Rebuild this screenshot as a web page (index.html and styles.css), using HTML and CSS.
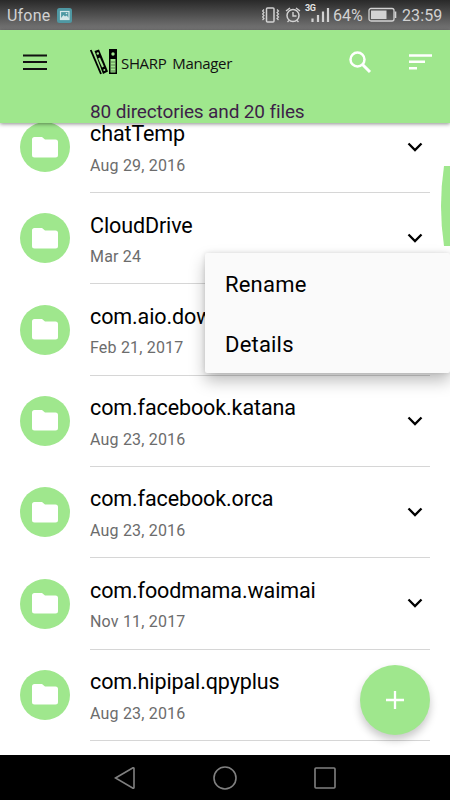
FILE: index.html
```
<!DOCTYPE html>
<html lang="en">
<head>
<meta charset="utf-8">
<title>SHARP Manager</title>
<link rel="stylesheet" href="styles.css">
</head>
<body>
<svg class="defs" width="0" height="0">
  <symbol id="folder" viewBox="0 0 26 21"><path d="M2.500 0H10L13 2.500H23.500A2.500 2.500 0 0 1 26 5V18A2.500 2.500 0 0 1 23.500 20.500H2.500A2.500 2.500 0 0 1 0 18V2.500A2.500 2.500 0 0 1 2.500 0Z" fill="#fff"/></symbol>
  <symbol id="chevron" viewBox="0 0 16 10"><path d="M1.500 1.500L8 8L14.500 1.500" fill="none" stroke="#000" stroke-width="2.300"/></symbol>
</svg>
<div class="screen">
  <div class="status">
    <span class="carrier">Ufone</span>
    <svg class="picture" width="15" height="15" viewBox="0 0 15 15"><rect width="15" height="15" rx="2.500" fill="#4f98a3"/><rect x="3.500" y="3.500" width="8.500" height="8" fill="none" stroke="#d5e6e8" stroke-width="1.200"/><path d="M4 10L6.500 7L8 8.500L9.500 7.500L12 10V11H4Z" fill="#d5e6e8"/><circle cx="9.500" cy="5.500" r=".8" fill="#d5e6e8"/></svg>
    <svg class="indicators" width="70" height="30" viewBox="262 0 70 30" fill="none" stroke="#d2d2d2">
      <rect x="266.500" y="8" width="7.500" height="14" rx="1" stroke-width="1.500"/>
      <path d="M264 9.500L262.500 11L264 12.500L262.500 14L264 15.500L262.500 17L264 18.500L262.500 20M277 9.500L278.500 11L277 12.500L278.500 14L277 15.500L278.500 17L277 18.500L278.500 20" stroke-width="1.200"/>
      <circle cx="293" cy="15.500" r="6" stroke-width="1.500"/>
      <path d="M293 12V16H296.500M286 11L290 8M300 11L296 8M289 20.500L287.500 22M297 20.500L298.500 22" stroke-width="1.400"/>
      <path d="M312.500 18.500V22M318 15V22M323 11.500V22M328 8V22" stroke-width="2.200"/>
      <text class="network" x="305" y="11">3G</text>
    </svg>
    <span class="percent">64%</span>
    <svg class="battery" width="29" height="16" viewBox="0 0 29 16"><rect x="1" y="1.500" width="25" height="12.500" rx="2" fill="none" stroke="#d2d2d2" stroke-width="1.300"/><rect x="3" y="3.500" width="15.500" height="8.500" fill="#d2d2d2"/><path d="M27.500 4.500V11" stroke="#d2d2d2" stroke-width="1.600"/></svg>
    <span class="clock">23:59</span>
  </div>
  <header class="appbar">
    <div class="toolbar">
      <svg class="menu-icon" width="24" height="16" viewBox="0 0 24 16"><path d="M0 1.500H24M0 8H24M0 15H24" stroke="#111" stroke-width="2"/></svg>
      <svg class="logo" width="28" height="26" viewBox="0 0 28 26">
        <path d="M.8 1L11 25" stroke="#000" stroke-width="1.800"/>
        <path d="M4.500 2L9 .5L18 22.500L13 25Z" fill="#000"/>
        <circle cx="7.800" cy="4.500" r="1.200" fill="#9fe78d"/>
        <path d="M9 9L13 18" stroke="#9fe78d" stroke-width="2"/>
        <circle cx="14.300" cy="21" r="1" fill="#9fe78d"/>
        <path d="M19 0H27V25H19Z" fill="#000"/>
        <circle cx="23" cy="5" r="1.700" fill="#9fe78d"/>
        <path d="M20.500 10H25.500V23.500H20.500Z" fill="#9fe78d"/>
        <path d="M20.500 13H25.500M20.500 16H25.500M20.500 19H25.500M20.500 22H25.500" stroke="#476b40" stroke-width=".8"/>
      </svg>
      <span class="brand">SHARP Manager</span>
      <svg class="search-icon" width="23" height="23" viewBox="0 0 23 23" fill="none" stroke="#fff"><circle cx="8.500" cy="8.500" r="7" stroke-width="2.500"/><path d="M13.500 13.500L21 21" stroke-width="3"/></svg>
      <svg class="sort-icon" width="23" height="16" viewBox="0 0 23 16"><path d="M0 1.500H23M0 7.800H16M0 14.200H8" stroke="#fff" stroke-width="2.500"/></svg>
    </div>
    <div class="summary">80 directories and 20 files</div>
  </header>
  <main class="files">
    <div class="file"><span class="avatar"><svg width="26" height="21"><use href="#folder"/></svg></span><div class="info"><div class="name">chatTemp</div><div class="date">Aug 29, 2016</div></div><svg class="chev" width="16" height="10"><use href="#chevron"/></svg></div>
    <div class="file"><span class="avatar"><svg width="26" height="21"><use href="#folder"/></svg></span><div class="info"><div class="name">CloudDrive</div><div class="date">Mar 24</div></div><svg class="chev" width="16" height="10"><use href="#chevron"/></svg></div>
    <div class="file"><span class="avatar"><svg width="26" height="21"><use href="#folder"/></svg></span><div class="info"><div class="name">com.aio.dow</div><div class="date">Feb 21, 2017</div></div></div>
    <div class="file"><span class="avatar"><svg width="26" height="21"><use href="#folder"/></svg></span><div class="info"><div class="name">com.facebook.katana</div><div class="date">Aug 23, 2016</div></div><svg class="chev" width="16" height="10"><use href="#chevron"/></svg></div>
    <div class="file"><span class="avatar"><svg width="26" height="21"><use href="#folder"/></svg></span><div class="info"><div class="name">com.facebook.orca</div><div class="date">Aug 23, 2016</div></div><svg class="chev" width="16" height="10"><use href="#chevron"/></svg></div>
    <div class="file"><span class="avatar"><svg width="26" height="21"><use href="#folder"/></svg></span><div class="info"><div class="name">com.foodmama.waimai</div><div class="date">Nov 11, 2017</div></div><svg class="chev" width="16" height="10"><use href="#chevron"/></svg></div>
    <div class="file"><span class="avatar"><svg width="26" height="21"><use href="#folder"/></svg></span><div class="info"><div class="name">com.hipipal.qpyplus</div><div class="date">Aug 23, 2016</div></div></div>
  </main>
  <nav class="navbar">
    <svg width="22" height="24" viewBox="0 0 22 24"><path d="M1.500 12L19 1.800Q20 1.500 20 2.500V21.500Q20 22.500 19 22.200Z"/></svg>
    <svg width="24" height="24" viewBox="0 0 24 24"><circle cx="12" cy="12" r="11"/></svg>
    <svg width="22" height="22" viewBox="0 0 22 22"><rect x="1" y="1" width="20" height="20" rx="1"/></svg>
  </nav>
  <svg class="scroll-thumb" width="9" height="80" viewBox="0 0 9 80"><path d="M9 0H3Q-3 40 3 80H9Z" fill="#9fe78d"/></svg>
  <div class="popup"><div class="option">Rename</div><div class="option">Details</div></div>
  <div class="fab"><svg width="18" height="18" viewBox="0 0 18 18"><path d="M9 0V18M0 9H18" stroke="#fff" stroke-width="2.300"/></svg></div>
</div>
</body>
</html>
```
FILE: styles.css
```
* { box-sizing: border-box; }
body { margin: 0; font-family: Roboto, sans-serif; }
svg { display: block; flex: none; }
.defs { position: absolute; }
.screen { position: relative; width: 450px; height: 800px; overflow: hidden; background: #fff; display: flex; flex-direction: column; }
.status { height: 30px; flex: none; display: flex; align-items: center; background: linear-gradient(#292929, #777); color: #d2d2d2; font-size: 16px; padding-left: 7px; }
.carrier { width: 50px; letter-spacing: .2px; }
.indicators { margin-left: 190px; }
.network { font: 700 9px Roboto, sans-serif; fill: #e4e4e4; stroke: none; letter-spacing: -.3px; }
.percent { width: 35px; margin-left: 1px; }
.clock { margin-left: 5px; letter-spacing: .1px; }
.appbar { height: 93px; flex: none; background: #9fe78d; box-shadow: 0 1px 4px rgba(0,0,0,.45); position: relative; z-index: 1; }
.toolbar { height: 64px; display: flex; align-items: center; padding-left: 23px; }
.logo { margin-left: 43px; }
.brand { font: 15px "Open Sans", sans-serif; letter-spacing: -.350px; word-spacing: 2.500px; margin-left: 3px; padding-top: 1px; width: 228px; white-space: nowrap; color: #111; }
.sort-icon { margin-left: 37px; }
.summary { padding-left: 90px; margin-top: 5px; font-size: 19px; line-height: 25px; letter-spacing: -.140px; color: #3d1f48; white-space: nowrap; }
.files { flex: 1; min-height: 0; overflow: hidden; display: flex; flex-direction: column; justify-content: flex-start; margin-top: -21.330px; }
.file { height: 91.330px; flex: none; display: flex; padding: 0 20px; }
.avatar { width: 50px; height: 50px; margin-top: 20.330px; flex: none; border-radius: 50%; background: #9fe78d; display: flex; align-items: center; justify-content: center; }
.info { flex: 1; margin-left: 20px; margin-right: -28px; border-bottom: 1px solid #d6d6d6; white-space: nowrap; }
.name { margin-top: 18.500px; font-size: 21.500px; line-height: 28px; color: #000; letter-spacing: -.110px; }
.date { margin-top: 6.400px; font-size: 16px; line-height: 22px; color: #6c6c6c; letter-spacing: .190px; }
.chev { margin-top: 40px; margin-left: 5px; margin-right: 7px; }
.file > .info:last-child { margin-right: 0; }
.navbar { height: 45px; flex: none; background: #000; display: flex; align-items: center; justify-content: space-between; padding: 0 114px; fill: none; stroke: #808080; stroke-width: 1.600; }
.scroll-thumb { position: absolute; right: 0; top: 166px; }
.popup { position: absolute; left: 205px; top: 253px; width: 245px; height: 120px; background: #fafafa; border-radius: 2px; box-shadow: 0 8px 16px rgba(0,0,0,.26), 0 0 5px rgba(0,0,0,.12); }
.option { height: 60px; padding: 18px 20px 14px; font-size: 22px; line-height: 28px; letter-spacing: .2px; }
.fab { position: absolute; left: 360px; top: 665px; width: 70px; height: 70px; border-radius: 50%; background: #9fe78d; box-shadow: 0 5px 9px rgba(0,0,0,.22); display: flex; align-items: center; justify-content: center; }
```
